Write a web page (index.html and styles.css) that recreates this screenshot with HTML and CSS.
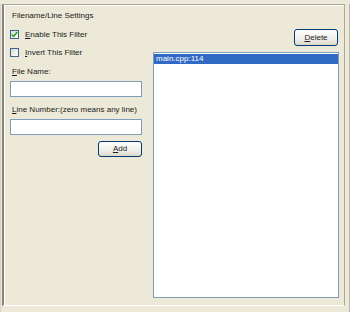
FILE: index.html
```html
<!DOCTYPE html>
<html lang="en">
<head>
    <meta charset="UTF-8">
    <title>Filename/Line Settings</title>
    <link rel="stylesheet" href="styles.css">
</head>
<body>
<div class="outer">
    <div class="frame">
        <div class="title">Filename/Line Settings</div>
        <div class="columns">
            <div class="left">
                <label class="check">
                    <span class="box on">
                        <svg width="7" height="7" viewBox="0 0 7 7"><path d="M0.8 3.4 L2.7 5.4 L6.2 1" fill="none" stroke="#21a121" stroke-width="1.5"/></svg>
                    </span>
                    <span><u>E</u>nable This Filter</span>
                </label>
                <label class="check">
                    <span class="box"></span>
                    <span><u>I</u>nvert This Filter</span>
                </label>
                <div class="field-label"><u>F</u>ile Name:</div>
                <div class="input"></div>
                <div class="field-label second"><u>L</u>ine Number:(zero means any line)</div>
                <div class="input"></div>
                <div class="btn-row">
                    <div class="btn"><u>A</u>dd</div>
                </div>
            </div>
            <div class="right">
                <div class="btn-row top">
                    <div class="btn tall"><u>D</u>elete</div>
                </div>
                <div class="listbox">
                    <div class="item selected">main.cpp:114</div>
                </div>
            </div>
        </div>
    </div>
</div>
</body>
</html>
```

FILE: styles.css
```css
body {
    margin: 0;
    background-color: #ece9d8;
    font-family: "Liberation Sans", Arial, sans-serif;
    font-size: 8px;
    color: #1a1a1a;
}
u {
    text-decoration: underline;
    text-underline-offset: 1px;
}
.outer {
    height: 308px;
    border-bottom: 4px solid #8e8c82;
    border-right: 1px solid #b8b5a8;
    border-left: 1px solid #d8d5c8;
}
.frame {
    box-sizing: border-box;
    margin: 4px 4px 0 1px;
    height: 302px;
    border-top: 1px solid #aca899;
    border-left: 2px solid #86847a;
    border-right: 1px solid #aca899;
    border-bottom: 1px solid #fff;
    box-shadow: inset 1px 1px 0 #fff;
    padding: 6px 5px 0 6px;
}
.title {
    height: 10px;
    line-height: 10px;
    padding-left: 2px;
}
.columns {
    display: grid;
    grid-template-columns: 132px 1fr;
    gap: 11px;
    margin-top: 8px;
}
.check {
    display: flex;
    align-items: center;
    gap: 6px;
    height: 10px;
    margin-bottom: 8px;
}
.box {
    box-sizing: border-box;
    width: 9px;
    height: 9px;
    border: 1px solid #3f6489;
    background: linear-gradient(135deg, #dcdbd5, #fff);
    display: flex;
    align-items: center;
    justify-content: center;
}
.field-label {
    height: 10px;
    line-height: 10px;
    margin-top: 10px;
    padding-left: 2px;
}
.field-label.second {
    margin-top: 8px;
}
.input {
    box-sizing: border-box;
    height: 16px;
    margin-top: 4px;
    border: 1px solid #7f9db9;
    background: #fff;
}
.btn-row {
    display: flex;
    justify-content: flex-end;
    margin-top: 6px;
}
.btn-row.top {
    margin-top: 0;
}
.btn {
    box-sizing: border-box;
    width: 44px;
    height: 16px;
    line-height: 14px;
    text-align: center;
    border: 1px solid #003c74;
    border-radius: 3px;
    background: linear-gradient(#ffffff, #f0efe8 60%, #dcd8cc);
}
.btn.tall {
    height: 17px;
    line-height: 15px;
    margin-right: 1px;
}
.listbox {
    box-sizing: border-box;
    height: 246px;
    margin-top: 6px;
    border: 1px solid #7f9db9;
    background: #fff;
    padding: 1px 0;
}
.item {
    height: 10px;
    line-height: 10px;
    padding-left: 2px;
}
.item.selected {
    background: #316ac5;
    color: #fff;
}
```
